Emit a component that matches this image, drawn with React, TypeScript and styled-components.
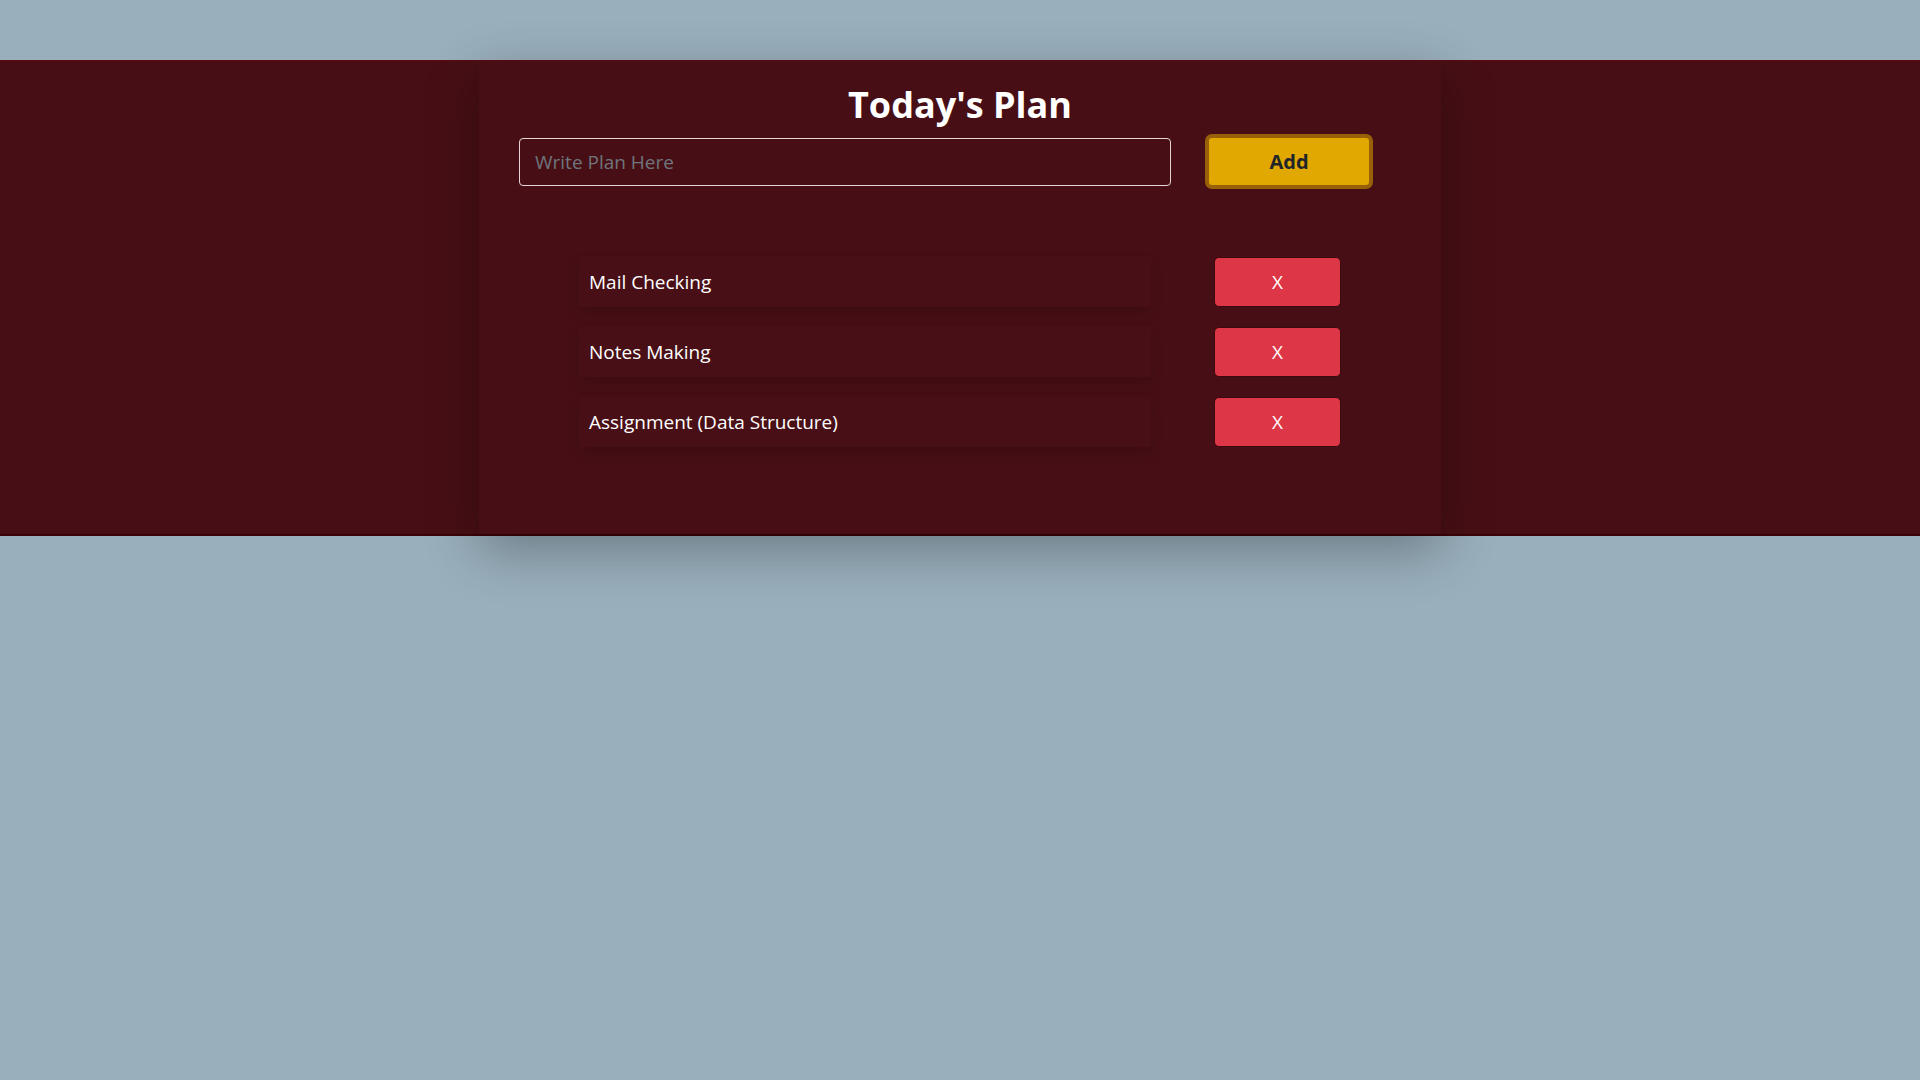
import { FC } from 'react'
import styled, { createGlobalStyle } from 'styled-components'

const plans = ['Mail Checking', 'Notes Making', 'Assignment (Data Structure)']

const App: FC = () => (
  <>
    <GlobalStyle />
    <Band>
      <Card>
        <Title>Today's Plan</Title>
        <InputRow>
          <PlanInput type="text" placeholder="Write Plan Here" />
          <AddButton>Add</AddButton>
        </InputRow>
        <List>
          {plans.map((plan) => (
            <ListRow key={plan}>
              <Item>{plan}</Item>
              <DeleteButton>X</DeleteButton>
            </ListRow>
          ))}
        </List>
      </Card>
    </Band>
  </>
)

export default App

const GlobalStyle = createGlobalStyle`
  html, body {
    margin: 0;
    background: #99afbc;
    font-family: "Open Sans", "Noto Sans", sans-serif;
  }

  body {
    box-sizing: border-box;
    min-height: 100vh;
    padding-top: 60px;
  }
`

const Band = styled.section`
  background: #470f15;
  border-top: 1px solid #5c0a10;
  border-bottom: 2px solid #3d0308;
  display: flex;
  justify-content: center;
`

const Card = styled.div`
  position: relative;
  z-index: 1;
  width: 962px;
  padding: 20px 0 87px;
  background: #470f15;
  box-shadow: 0 16px 50px rgba(0, 0, 0, 0.3);
  display: flex;
  flex-direction: column;
`

const Title = styled.h1`
  margin: 0;
  color: #ffffff;
  font-size: 36px;
  font-weight: 700;
  line-height: 48px;
  text-align: center;
`

const InputRow = styled.div`
  margin-top: 5px;
  padding-left: 40px;
  display: flex;
  align-items: center;
  gap: 34px;
`

const PlanInput = styled.input`
  width: 652px;
  height: 48px;
  box-sizing: border-box;
  padding: 0 15px;
  background: transparent;
  border: 1px solid #e4d6d6;
  border-radius: 4px;
  color: #ffffff;
  font-family: inherit;
  font-size: 19px;
  outline: none;

  &::placeholder {
    color: #6f757c;
  }
`

const AddButton = styled.button`
  width: 168px;
  height: 55px;
  box-sizing: border-box;
  background: #e0a800;
  border: 4px solid #99600a;
  border-radius: 7px;
  color: #212529;
  font-family: inherit;
  font-size: 20px;
  font-weight: 700;
  cursor: pointer;
`

const List = styled.ul`
  margin: 68px 0 0;
  padding: 0 0 0 100px;
  list-style: none;
  display: flex;
  flex-direction: column;
  gap: 20px;
`

const ListRow = styled.li`
  display: flex;
  align-items: center;
  gap: 63px;
`

const Item = styled.div`
  width: 572px;
  height: 50px;
  box-sizing: border-box;
  padding-left: 10px;
  display: flex;
  align-items: center;
  background: #481016;
  box-shadow: 0 6px 12px rgba(0, 0, 0, 0.14);
  color: #ffffff;
  font-size: 19px;
`

const DeleteButton = styled.button`
  width: 127px;
  height: 50px;
  background: #dd3646;
  border: 1px solid #3a0a0e;
  border-radius: 5px;
  color: #ffffff;
  font-family: inherit;
  font-size: 19px;
  cursor: pointer;
`
